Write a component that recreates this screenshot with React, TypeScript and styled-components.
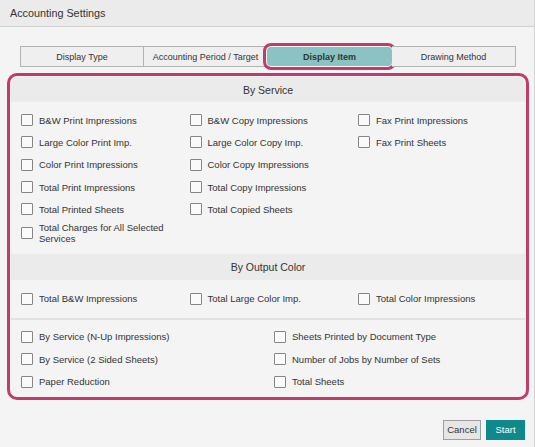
import React from 'react'
import styled, { createGlobalStyle } from 'styled-components'

const GlobalStyle = createGlobalStyle`
  html, body {
    margin: 0;
    padding: 0;
    background: #f4f4f4;
  }
  body {
    font-family: Arial, "Liberation Sans", sans-serif;
    color: #333;
  }
`

const Dialog = styled.div`
  width: 535px;
  height: 447px;
  box-sizing: border-box;
  background: #f4f4f4;
  border-right: 1px solid #d4d4d4;
  display: flex;
  flex-direction: column;
`

const TitleBar = styled.div`
  height: 27px;
  box-sizing: border-box;
  background: #ebebeb;
  border-bottom: 1px solid #d0d0d0;
  padding-left: 10px;
  display: flex;
  align-items: center;
  font-size: 10.8px;
  color: #333;
`

const Tabs = styled.div`
  display: grid;
  grid-template-columns: repeat(4, 124px);
  margin: 19px 0 0 20px;
  height: 21px;
`

const Tab = styled.div<{ $active?: boolean }>`
  position: relative;
  box-sizing: border-box;
  display: flex;
  align-items: center;
  justify-content: center;
  white-space: nowrap;
  font-size: 9px;
  font-weight: ${({ $active }) => ($active ? 'bold' : 'normal')};
  color: #333;
  background: ${({ $active }) => ($active ? '#8bc3c5' : '#efefef')};
  border: 1px solid #b3b3b3;
  border-left-width: 0;
  &:first-child {
    border-left-width: 1px;
  }
  ${({ $active }) =>
    $active &&
    `
    &::after {
      content: '';
      position: absolute;
      left: -5px;
      right: -5px;
      top: -4px;
      bottom: -4px;
      border: 3px solid #c13c6c;
      border-radius: 8px;
      background: transparent;
      box-shadow: inset 0 0 0 1px #f7f7f7;
    }
  `}
`

const Highlight = styled.div`
  margin: 6px 5px 0 7px;
  border: 3px solid #c13c6c;
  border-radius: 10px;
  padding: 1px;
  display: flex;
  flex-direction: column;
`

const SectionHeader = styled.div<{ $h: number; $first?: boolean }>`
  height: ${({ $h }) => $h}px;
  background: #ebebeb;
  display: flex;
  align-items: center;
  justify-content: center;
  font-size: 10.5px;
  color: #333;
  border-radius: ${({ $first }) => ($first ? '7px 7px 0 0' : '0')};
`

const Grid = styled.div<{ $cols: number; $colW: number; $pad: string }>`
  display: grid;
  grid-template-columns: repeat(${({ $cols }) => $cols}, ${({ $colW }) => $colW}px);
  padding: ${({ $pad }) => $pad};
`

const Item = styled.label<{ $wrap?: boolean }>`
  display: flex;
  align-items: center;
  gap: 6px;
  min-height: 22.3px;
  box-sizing: border-box;
  padding: ${({ $wrap }) => ($wrap ? '2px 0' : '0')};
  font-size: 9.5px;
  color: #333;
  white-space: ${({ $wrap }) => ($wrap ? 'normal' : 'nowrap')};
`

const Box = styled.span`
  flex: none;
  width: 12px;
  height: 12px;
  box-sizing: border-box;
  border: 1px solid #858585;
  border-radius: 1px;
  background: #fafafa;
`

const Label = styled.span<{ $wrap?: boolean }>`
  line-height: 11px;
  max-width: ${({ $wrap }) => ($wrap ? '135px' : 'none')};
`

const Divider = styled.div`
  height: 2px;
  background: #e2e2e2;
`

const Footer = styled.div`
  display: flex;
  justify-content: flex-end;
  gap: 5px;
  margin: 20px 9px 0 0;
`

const Button = styled.button<{ $primary?: boolean }>`
  height: 20px;
  width: ${({ $primary }) => ($primary ? '39px' : '38px')};
  padding: 0;
  box-sizing: border-box;
  font-family: Arial, "Liberation Sans", sans-serif;
  font-size: 9.5px;
  color: ${({ $primary }) => ($primary ? '#fff' : '#333')};
  background: ${({ $primary }) => ($primary ? '#0f8a8c' : '#e6e6e6')};
  border: 1px solid ${({ $primary }) => ($primary ? '#0f8a8c' : '#9e9e9e')};
  border-radius: 0;
`

const Check = ({ text, wrap }: { text: string; wrap?: boolean }) => (
  <Item $wrap={wrap}>
    <Box />
    <Label $wrap={wrap}>{text}</Label>
  </Item>
)

const byService = [
  'B&W Print Impressions',
  'B&W Copy Impressions',
  'Fax Print Impressions',
  'Large Color Print Imp.',
  'Large Color Copy Imp.',
  'Fax Print Sheets',
  'Color Print Impressions',
  'Color Copy Impressions',
  '',
  'Total Print Impressions',
  'Total Copy Impressions',
  '',
  'Total Printed Sheets',
  'Total Copied Sheets',
  '',
]

const others = [
  'By Service (N-Up Impressions)',
  'Sheets Printed by Document Type',
  'By Service (2 Sided Sheets)',
  'Number of Jobs by Number of Sets',
  'Paper Reduction',
  'Total Sheets',
]

const App: React.FC = () => {
  return (
    <>
      <GlobalStyle />
      <Dialog>
        <TitleBar>Accounting Settings</TitleBar>
        <Tabs>
          <Tab>Display Type</Tab>
          <Tab>Accounting Period / Target</Tab>
          <Tab $active>Display Item</Tab>
          <Tab>Drawing Method</Tab>
        </Tabs>
        <Highlight>
          <SectionHeader $h={25} $first>By Service</SectionHeader>
          <Grid $cols={3} $colW={168.5} $pad="7px 10px 8px">
            {byService.map((t, i) => (t ? <Check key={i} text={t} /> : <div key={i} />))}
            <Check text="Total Charges for All Selected Services" wrap />
          </Grid>
          <SectionHeader $h={26}>By Output Color</SectionHeader>
          <Grid $cols={3} $colW={168.5} $pad="7px 10px 8px">
            <Check text="Total B&W Impressions" />
            <Check text="Total Large Color Imp." />
            <Check text="Total Color Impressions" />
          </Grid>
          <Divider />
          <Grid $cols={2} $colW={253} $pad="6px 10px 3px">
            {others.map((t) => (
              <Check key={t} text={t} />
            ))}
          </Grid>
        </Highlight>
        <Footer>
          <Button>Cancel</Button>
          <Button $primary>Start</Button>
        </Footer>
      </Dialog>
    </>
  )
}

export default App
